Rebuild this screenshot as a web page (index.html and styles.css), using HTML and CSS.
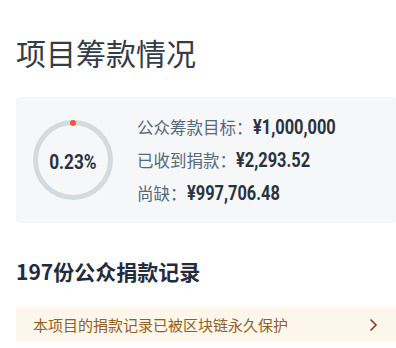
FILE: index.html
```html
<!DOCTYPE html>
<html lang="zh">
<head>
<meta charset="utf-8">
<link rel="stylesheet" href="styles.css">
</head>
<body>
<div class="page">
  <h1 class="title">项目筹款情况</h1>
  <div class="card">
    <div class="ring">
      <svg class="ring-svg" width="80" height="80" viewBox="0 0 80 80">
        <circle cx="40" cy="40" r="37.5" fill="none" stroke="#d3dbe0" stroke-width="5"/>
        <circle cx="40" cy="3" r="3" fill="#f2553a"/>
      </svg>
      <span class="ring-text"><span class="num num-center">0.23%</span></span>
    </div>
    <div class="stats">
      <div class="row"><span class="label">公众筹款目标：</span><span class="num">¥1,000,000</span></div>
      <div class="row"><span class="label">已收到捐款：</span><span class="num">¥2,293.52</span></div>
      <div class="row"><span class="label">尚缺：</span><span class="num">¥997,706.48</span></div>
    </div>
  </div>
  <h2 class="section">197份公众捐款记录</h2>
  <div class="banner">
    <span class="banner-text">本项目的捐款记录已被区块链永久保护</span>
    <svg class="chev" width="10" height="14" viewBox="0 0 10 14">
      <path d="M2.5 1.5 L8 7 L2.5 12.5" fill="none" stroke="#8a3a1f" stroke-width="1.6"/>
    </svg>
  </div>
</div>
</body>
</html>
```
FILE: styles.css
```css
html, body {
  margin: 0;
  padding: 0;
  background: #ffffff;
}
body {
  font-family: "Noto Sans CJK SC", "Noto Sans", sans-serif;
}
.page {
  padding: 32px 0 0 16px;
  width: 380px;
}
.title {
  margin: 0;
  font-size: 30px;
  line-height: 40px;
  font-weight: 400;
  color: #353c43;
}
.card {
  margin-top: 25px;
  height: 126px;
  background: #f5f7f9;
  border-radius: 4px;
  display: flex;
  align-items: center;
  padding-left: 17px;
  box-sizing: border-box;
}
.ring {
  position: relative;
  width: 80px;
  height: 80px;
  flex: none;
}
.ring-svg {
  display: block;
}
.ring-text {
  position: absolute;
  inset: 0;
  display: flex;
  align-items: center;
  justify-content: center;
  padding-top: 3px;
}
.num {
  display: inline-block;
  font-family: Roboto, "Liberation Sans", sans-serif;
  font-weight: 700;
  font-size: 20px;
  color: #29323d;
  transform: scaleX(0.82);
  transform-origin: left center;
}
.num-center {
  font-size: 21px;
  transform-origin: center center;
}
.stats {
  margin-left: 24px;
  display: flex;
  flex-direction: column;
}
.row {
  height: 33px;
  display: flex;
  align-items: center;
}
.label {
  font-size: 16.5px;
  color: #56697b;
  white-space: nowrap;
}
.section {
  margin: 33px 0 0;
  font-size: 21px;
  line-height: 30px;
  font-weight: 700;
  color: #232b3c;
}
.banner {
  margin-top: 21px;
  height: 35px;
  background: #fdf6ea;
  display: flex;
  align-items: center;
  justify-content: space-between;
  padding: 0 18px 0 17px;
}
.banner-text {
  font-size: 15px;
  color: #92601f;
}
.chev {
  display: block;
}
```
